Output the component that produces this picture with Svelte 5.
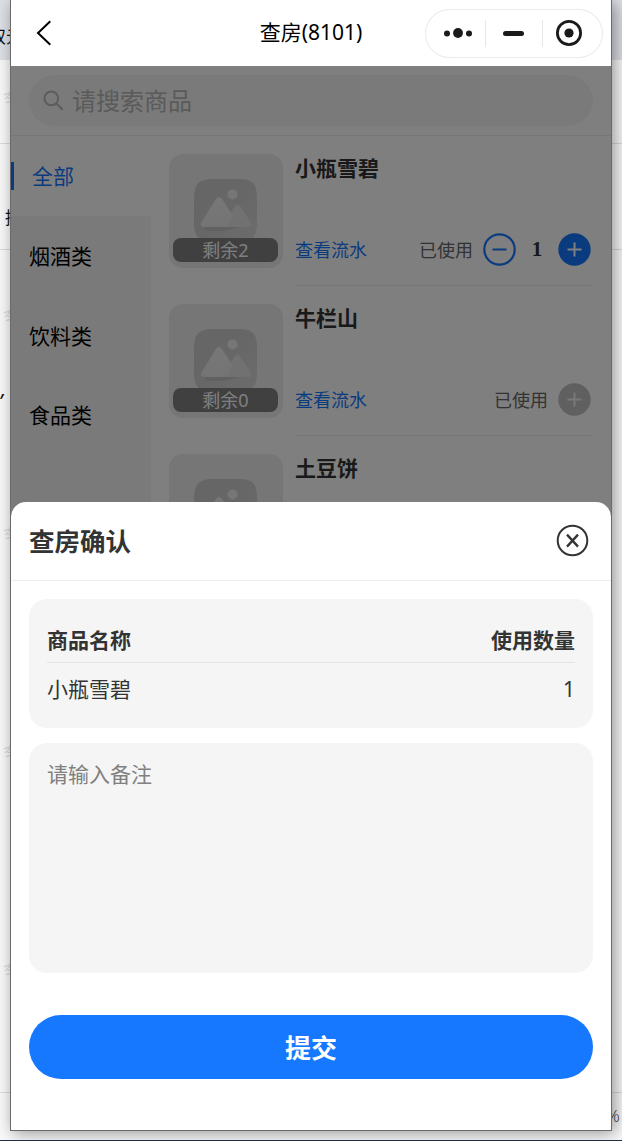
<script lang="ts">
  type Product = { name: string; left: number; used: number; available: boolean };

  const categories = ['全部', '烟酒类', '饮料类', '食品类'];
  let active = $state('全部');

  let products: Product[] = $state([
    { name: '小瓶雪碧', left: 2, used: 1, available: true },
    { name: '牛栏山', left: 0, used: 0, available: false },
    { name: '土豆饼', left: 0, used: 0, available: false },
  ]);

  let remark = $state('');
  const picked = $derived(products.filter((p) => p.used > 0));

  // Bits of the page behind the window that stick out at its edges
  const marks = [98, 316, 534, 752, 970];
  const rules = [143, 249, 1092];
</script>

<div class="desktop">
  <div class="tabbar"></div>
  {#each rules as y}
    <div class="rule" style="top: {y}px"></div>
  {/each}
  {#each marks as y}
    <span class="mark" style="top: {y - 11}px">李</span>
  {/each}
  <span class="scrap" style="left: -11px; top: 26px">双元</span>
  <span class="scrap" style="left: 5px; top: 207px">招</span>
  <span class="scrap comma" style="left: 1px; top: 378px">,</span>
  <span class="scrap percent" style="left: 606px; top: 1105px">%</span>

  <div class="window">
    <header class="navbar">
      <svg class="back" width="16" height="26" viewBox="0 0 16 26" fill="none" stroke="#000" stroke-width="2">
        <path d="M14.3 1.2 2 13 14.3 24.8" />
      </svg>
      <h1>查房(8101)</h1>
      <div class="capsule">
        <svg width="178" height="49" viewBox="0 0 178 49">
          <g fill="#1a1a1a">
            <circle cx="22" cy="24.5" r="3" />
            <circle cx="33" cy="24" r="4.9" />
            <circle cx="44" cy="24.5" r="3" />
            <rect x="78" y="22" width="21" height="5" rx="2.5" />
            <circle cx="144" cy="24" r="4.6" />
          </g>
          <circle cx="144" cy="24" r="11.6" fill="none" stroke="#1a1a1a" stroke-width="2.8" />
          <path d="M60.5 11v27M117.5 11v27" stroke="#e8e8e8" />
        </svg>
      </div>
    </header>

    <main class="page">
      <div class="search-wrap">
        <div class="search">
          <svg width="21" height="21" viewBox="0 0 21 21" fill="none" stroke="#b8b8b8" stroke-width="2">
            <circle cx="8.3" cy="8.3" r="6.9" />
            <path d="m13.2 13.2 6.4 6.6" />
          </svg>
          <span>请搜索商品</span>
        </div>
      </div>

      <div class="body">
        <nav class="sidebar">
          {#each categories as category}
            <button class="category" class:active={category === active} onclick={() => (active = category)}>
              {category}
            </button>
          {/each}
        </nav>

        <section class="products">
          {#each products as product}
            <article class="product">
              <div class="thumb">
                <svg width="66" height="66" viewBox="0 0 66 66">
                  <defs>
                    <linearGradient id="tile" x1="0" y1="0" x2="1" y2="1">
                      <stop offset="0" stop-color="#cccccc" />
                      <stop offset="0.5" stop-color="#cecece" />
                      <stop offset="1" stop-color="#dadada" />
                    </linearGradient>
                    <linearGradient id="hill" x1="0" y1="0" x2="0" y2="1">
                      <stop offset="0" stop-color="#efefef" />
                      <stop offset="1" stop-color="#e9e9e9" />
                    </linearGradient>
                  </defs>
                  <path d="M1 22C1 6 5 1 21 1h24c16 0 19 5 19 21v22c0 15-5 20-19 20H21C6 64 1 59 1 44z" fill="url(#tile)" />
                  <path d="M10 49h36l-14 4H14z" fill="#bebebe" opacity="0.7" />
                  <circle cx="39.5" cy="16.5" r="5" fill="#ededed" />
                  <path d="M42 28q2.5-3 5 0l11 17q1 4-3 4H28z" fill="#e2e2e2" />
                  <path d="M23 21q3-4 6 0l11 17-7 11H11q-4 0-3-4z" fill="url(#hill)" />
                </svg>
                <span class="left">剩余{product.left}</span>
              </div>
              <div class="info">
                <h2>{product.name}</h2>
                <div class="actions">
                  <a class="log" href="#log">查看流水</a>
                  <span class="used">已使用</span>
                  {#if product.used > 0}
                    <button class="step" aria-label="减少" onclick={() => product.used--}>
                      <svg width="33" height="33" viewBox="0 0 33 33" fill="none" stroke="#1677ff">
                        <circle cx="16.5" cy="16.5" r="15.2" stroke-width="2.2" />
                        <path d="M9.5 16.5h14" stroke-width="2" />
                      </svg>
                    </button>
                    <b class="count">{product.used}</b>
                  {/if}
                  <button class="step" aria-label="增加" disabled={!product.available} onclick={() => product.used++}>
                    <svg width="33" height="33" viewBox="0 0 33 33" fill="none">
                      <circle cx="16.5" cy="16.5" r="16.2" fill={product.available ? '#1677ff' : '#c0c0c0'} />
                      <path d="M9.5 16.5h14M16.5 9.5v14" stroke={product.available ? '#fff' : '#f0f0f0'} stroke-width="2" />
                    </svg>
                  </button>
                </div>
              </div>
            </article>
          {/each}
        </section>
      </div>
    </main>

    <div class="overlay"></div>

    <div class="sheet">
      <div class="sheet-head">
        <h3>查房确认</h3>
        <button class="step" aria-label="关闭">
          <svg width="33" height="33" viewBox="0 0 33 33" fill="none" stroke="#333">
            <circle cx="16.5" cy="16.5" r="14.8" stroke-width="2" />
            <path d="m11 10.6 11 12M22 10.6l-11 12" stroke-width="2.3" />
          </svg>
        </button>
      </div>
      <div class="sheet-body">
        <div class="table">
          <div class="row head"><span>商品名称</span><span>使用数量</span></div>
          {#each picked as product}
            <div class="row"><span>{product.name}</span><span>{product.used}</span></div>
          {/each}
        </div>
        <textarea placeholder="请输入备注" bind:value={remark}></textarea>
        <button class="submit">提交</button>
      </div>
    </div>
  </div>
</div>

<style>
  :global(body) {
    margin: 0;
  }

  .desktop {
    position: relative;
    box-sizing: border-box;
    width: 622px;
    height: 1141px;
    padding: 0 10px;
    overflow: hidden;
    background: #fafafa;
    border-bottom: 1px solid #1c2f45;
    font-family: 'Noto Sans', 'Noto Sans CJK SC', sans-serif;
    font-weight: 400;
    color: #333;
  }

  .tabbar {
    position: absolute;
    inset: 0 0 auto;
    height: 60px;
    background: #dee1e6;
  }

  .rule {
    position: absolute;
    left: 0;
    right: 0;
    height: 1px;
    background: #dcdcdc;
  }

  .mark,
  .scrap {
    position: absolute;
    line-height: 22px;
    white-space: nowrap;
  }

  .mark {
    left: 4px;
    font-size: 16px;
    color: #dadada;
    transform: rotate(-15deg);
  }

  .scrap {
    font-size: 17px;
    color: #111;
  }

  .comma {
    font-size: 20px;
    font-style: italic;
  }

  .percent {
    font-weight: 300;
    color: #444;
  }

  .window {
    position: relative;
    display: flex;
    flex-direction: column;
    box-sizing: border-box;
    width: 602px;
    height: 1131px;
    overflow: hidden;
    border: 1px solid #686a6c;
    border-top: 0;
    background: #fff;
    box-shadow: 3px 2px 16px rgba(0, 0, 0, 0.42);
  }

  .navbar {
    display: grid;
    grid-template-columns: 1fr auto 1fr;
    align-items: center;
    flex: none;
    height: 66px;
    padding: 0 8px;
  }

  .back {
    margin-left: 17px;
  }

  h1,
  h2,
  h3 {
    margin: 0;
  }

  h1 {
    padding-bottom: 4px;
    font-size: 21px;
    font-weight: 400;
    color: #000;
  }

  .capsule {
    justify-self: end;
    box-sizing: border-box;
    width: 178px;
    height: 49px;
    border-radius: 25px;
    box-shadow: inset 0 0 0 1px #ebebeb;
  }

  svg {
    display: block;
  }

  button {
    padding: 0;
    border: 0;
    background: none;
    font: inherit;
    color: inherit;
  }

  .page {
    display: flex;
    flex-direction: column;
    flex: 1;
    min-height: 0;
  }

  .search-wrap {
    padding: 9px 18px;
    border-bottom: 1px solid #eee;
  }

  .search {
    display: flex;
    align-items: center;
    gap: 8px;
    height: 51px;
    padding-left: 14px;
    border-radius: 26px;
    background: #f5f5f5;
    font-size: 24px;
    line-height: 51px;
    color: #b4b4b4;
  }

  .body {
    display: flex;
    flex: 1;
    min-height: 0;
  }

  .sidebar {
    flex: none;
    width: 140px;
    background: #f5f5f5;
  }

  .category {
    display: block;
    width: 100%;
    height: 79.7px;
    padding: 0 0 1px 18px;
    font-size: 21px;
    text-align: left;
    color: #000;
  }

  .category.active {
    padding-left: 21px;
    background: linear-gradient(#1677ff, #1677ff) 0 26px / 3px 28px no-repeat #fff;
    color: #1677ff;
  }

  .products {
    flex: 1;
    padding: 0 18px;
  }

  .product {
    display: flex;
    gap: 12px;
    height: 150px;
  }

  .thumb {
    display: flex;
    flex-direction: column;
    align-items: center;
    flex: none;
    box-sizing: border-box;
    width: 114px;
    height: 114px;
    margin-top: 18px;
    padding: 24px 1px 0 0;
    border-radius: 14px;
    background: #ededed;
  }

  .left {
    position: relative;
    width: 105px;
    height: 24px;
    margin-top: -6px;
    border-radius: 8px;
    background: #808080;
    font-size: 18px;
    line-height: 24px;
    text-align: center;
    color: #fff;
  }

  .info {
    flex: 1;
    display: flex;
    flex-direction: column;
    box-sizing: border-box;
    padding-top: 18px;
    border-bottom: 1px solid #eee;
  }

  h2 {
    font-size: 21px;
    font-weight: 700;
    line-height: 29px;
  }

  .actions {
    display: flex;
    align-items: center;
    height: 33px;
    margin-top: 50px;
    padding-right: 2px;
    font-size: 18px;
  }

  .log,
  .used {
    padding-bottom: 2px;
  }

  .log {
    margin-right: auto;
    color: #1677ff;
    text-decoration: none;
  }

  .used {
    margin-right: 10px;
    color: #666;
  }

  .step {
    flex: none;
    width: 33px;
    height: 33px;
  }

  .count {
    width: 42px;
    font: bold 21px 'Liberation Serif', serif;
    text-align: center;
  }

  .overlay {
    position: absolute;
    inset: 66px 0 0;
    background: rgba(0, 0, 0, 0.5);
  }

  .sheet {
    position: absolute;
    inset: 502px 0 0;
    border-radius: 15px 15px 0 0;
    background: #fff;
  }

  .sheet-head {
    display: flex;
    align-items: center;
    justify-content: space-between;
    box-sizing: border-box;
    height: 79px;
    padding: 0 22px 1px 18px;
    border-bottom: 1px solid #eee;
  }

  h3 {
    padding-bottom: 3px;
    font-size: 25.5px;
    font-weight: 700;
  }

  .sheet-body {
    display: flex;
    flex-direction: column;
    padding: 18px 18px 0;
  }

  .table {
    box-sizing: border-box;
    height: 129px;
    padding: 18px;
    border-radius: 18px;
    background: #f5f5f5;
    font-size: 21px;
  }

  .row {
    display: flex;
    justify-content: space-between;
    height: 54px;
    line-height: 52px;
  }

  .row.head {
    height: 45px;
    border-bottom: 1px solid #e4e4e4;
    font-weight: 700;
    line-height: 46px;
  }

  textarea {
    box-sizing: border-box;
    height: 230px;
    margin-top: 15px;
    padding: 16px 18px;
    border: 0;
    border-radius: 18px;
    background: #f5f5f5;
    font: inherit;
    font-size: 21px;
    line-height: 30px;
    resize: none;
  }

  textarea::placeholder {
    color: #808080;
  }

  .submit {
    height: 64px;
    margin-top: 42px;
    border-radius: 32px;
    background: #1677ff;
    font-size: 26px;
    font-weight: 700;
    color: #fff;
  }
</style>
